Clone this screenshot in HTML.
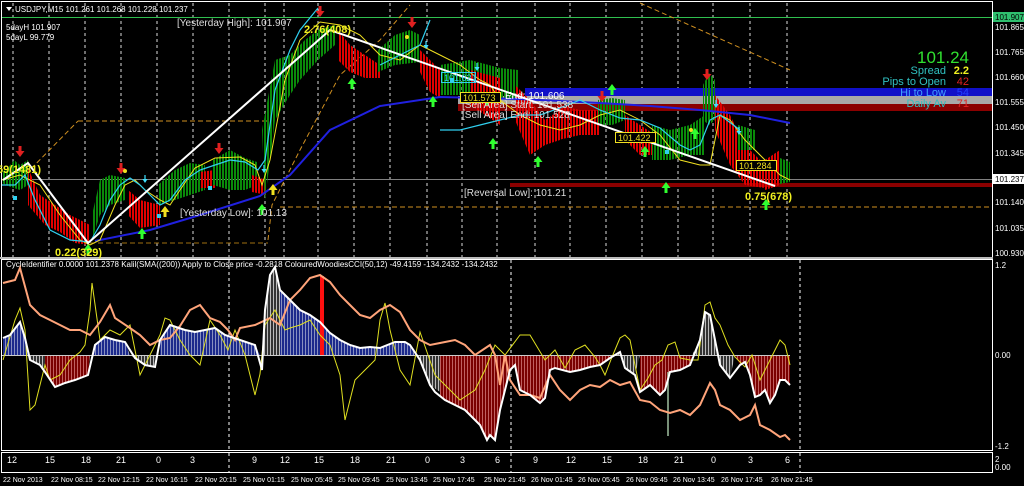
<!DOCTYPE html>
<html><head><meta charset="utf-8"><style>
html,body{margin:0;padding:0;background:#000;width:1024px;height:486px;overflow:hidden}
svg{display:block}
text{font-family:"Liberation Sans",sans-serif}
</style></head><body>
<svg width="1024" height="486" viewBox="0 0 1024 486" xmlns="http://www.w3.org/2000/svg">
<defs>
<pattern id="pg" width="3" height="10" patternUnits="userSpaceOnUse"><rect x="0" y="0" width="2" height="10" fill="#0a8a0a"/></pattern>
<pattern id="pr" width="3" height="10" patternUnits="userSpaceOnUse"><rect x="0" y="0" width="2" height="10" fill="#e00000"/></pattern>
<pattern id="hb" width="3" height="10" patternUnits="userSpaceOnUse"><rect x="0" y="0" width="2" height="10" fill="#1c2a8c"/><rect x="2" y="0" width="1" height="10" fill="#8890c0"/></pattern>
<pattern id="hr" width="3" height="10" patternUnits="userSpaceOnUse"><rect x="0" y="0" width="2" height="10" fill="#7a0000"/><rect x="2" y="0" width="1" height="10" fill="#c06060"/></pattern>
<pattern id="hg" width="3" height="10" patternUnits="userSpaceOnUse"><rect x="0" y="0" width="1" height="10" fill="#bbb"/><rect x="1" y="0" width="2" height="10" fill="#333"/></pattern>
<path id="ad" d="M-1.5,-7h3v5h3l-4.5,6l-4.5,-6h3z"/>
<path id="au" d="M-1.5,7h3v-5h3l-4.5,-6l-4.5,6h3z"/>
<path id="sd" d="M-0.6,-5h1.2v4h2l-2.6,4l-2.6,-4h2z"/>
</defs>
<rect width="1024" height="486" fill="#000"/>
<rect x="1.5" y="1.5" width="991" height="256" fill="none" stroke="#fff" stroke-width="1"/>
<rect x="0" y="257" width="993" height="2" fill="#bbb"/>
<rect x="1.5" y="259.5" width="991" height="191" fill="none" stroke="#fff" stroke-width="1"/>
<rect x="1.5" y="452.5" width="991" height="20" fill="none" stroke="#fff" stroke-width="1"/>
<g stroke="#ddd" stroke-width="1" stroke-dasharray="3,3">
<path d="M13 3V257M49 3V257M85 3V257M121 3V257M157 3V257M193 3V257M229 3V257M265 3V257M284 3V257M318 3V257M354 3V257M390 3V257M427 3V257M462 3V257M497 3V257M535 3V257M570 3V257M606 3V257M642 3V257M678 3V257M713 3V257M750 3V257M787 3V257"/>
<path d="M229 260V450M511 260V450M800 260V450M229 453V472M511 453V472M800 453V472" stroke="#fff"/>
</g>
<rect x="525" y="88" width="467" height="8" fill="#1010c8"/>
<rect x="458" y="96" width="534" height="8" fill="#a8a8a8"/>
<rect x="458" y="104" width="534" height="7" fill="#8b0000"/>
<rect x="510" y="183" width="482" height="4" fill="#8b0000"/>
<line x1="2" y1="179.5" x2="992" y2="179.5" stroke="#808080"/>
<line x1="2" y1="17.5" x2="992" y2="17.5" stroke="#2fbf4f"/>
<g stroke="#d09020" stroke-width="1" stroke-dasharray="5,3" fill="none">
<path d="M280 207H992"/>
<path d="M78 121H268"/>
<path d="M90 243H268" stroke="#a07010"/>
<path d="M20 180L78 121"/>
<path d="M268 240L272 205L300 150L340 75L380 40L410 5"/>
<path d="M640 3L790 70"/>
</g>
<g>
<polygon fill="url(#pg)" points="2,172 8,168 14,160 20,165 28,160 28,185 20,190 14,188 8,186 2,183"/>
<polygon fill="url(#pr)" points="28,168 40,195 55,205 70,215 90,225 90,245 75,243 60,232 45,225 28,205"/>
<polygon fill="url(#pg)" points="92,215 100,180 110,175 125,178 125,200 110,205 100,215 92,240"/>
<polygon fill="url(#pr)" points="128,190 140,200 160,205 160,225 140,228 128,215"/>
<polygon fill="url(#pg)" points="158,185 175,170 190,163 205,165 205,190 190,195 175,200 158,205"/>
<polygon fill="url(#pr)" points="200,172 215,170 215,188 200,188"/>
<polygon fill="url(#pg)" points="213,160 230,150 245,158 257,162 257,185 245,190 230,190 213,185"/>
<polygon fill="url(#pr)" points="252,175 266,180 266,195 252,192"/>
<polygon fill="url(#pg)" points="262,130 275,60 290,55 305,40 318,30 335,25 335,45 318,60 300,80 290,95 275,120 265,200"/>
<polygon fill="url(#pr)" points="338,30 350,45 365,55 380,65 380,78 365,78 350,72 338,60"/>
<polygon fill="url(#pg)" points="378,50 395,35 410,30 420,35 420,62 395,65 378,72"/>
<polygon fill="url(#pr)" points="420,50 430,60 440,70 440,98 430,92 420,72"/>
<polygon fill="url(#pg)" points="440,65 470,60 500,68 518,70 518,100 500,98 470,95 440,95"/>
<polygon fill="url(#pr)" points="470,70 500,78 500,125 470,105"/>
<polygon fill="url(#pr)" points="515,85 530,100 545,120 560,110 560,140 545,145 530,155 515,120"/>
<polygon fill="url(#pr)" points="558,105 580,110 600,110 600,135 580,135 558,140"/>
<polygon fill="url(#pg)" points="598,100 612,98 625,100 625,120 612,125 598,125"/>
<polygon fill="url(#pr)" points="625,115 640,125 655,135 655,155 640,155 625,140"/>
<polygon fill="url(#pg)" points="652,125 670,130 690,125 705,115 705,155 690,155 670,160 652,160"/>
<polygon fill="url(#pg)" points="703,85 709,73 715,80 715,120 709,125 703,120"/>
<polygon fill="url(#pr)" points="715,95 730,115 745,145 765,165 765,188 745,185 730,165 715,130"/>
<polygon fill="url(#pg)" points="738,125 755,130 755,150 738,150"/>
<polygon fill="url(#pr)" points="765,160 780,150 780,185 765,190"/>
<polygon fill="url(#pg)" points="780,158 790,162 790,182 780,184"/>
</g>
<polyline fill="none" stroke="#2020e0" stroke-width="2" points="95,241 150,230 200,215 260,196 290,175 330,130 380,106 440,97 520,99 600,103 650,106 700,110 750,115 790,123"/>
<polyline fill="none" stroke="#f0e020" stroke-width="1" points="2,180 20,175 40,185 60,215 80,240 90,245 100,240 115,205 125,185 135,180 145,190 160,200 170,205 180,190 195,168 215,158 240,157 255,165 262,185 270,160 285,80 300,40 320,22 340,25 360,35 380,55 400,60 420,45 440,55 460,65 480,80 490,85 500,100 520,115 540,125 560,130 580,125 600,115 620,110 640,120 660,135 680,160 700,165 710,165 720,115 730,120 745,140 755,150 770,165 780,175 790,180"/>
<polyline fill="none" stroke="#30d0f0" stroke-width="1.2" points="2,185 15,185 25,175 35,200 50,230 70,240 90,242 100,225 110,200 120,185 130,178 140,185 150,195 160,205 170,200 185,180 200,170 215,165 230,160 245,162 258,170 265,160 275,90 290,50 300,30 318,8"/>
<polyline fill="none" stroke="#30d0f0" stroke-width="1.2" points="380,65 400,55 420,45 430,20"/>
<polyline fill="none" stroke="#30d0f0" stroke-width="1.2" points="440,130 460,130 480,125 500,120 520,115 540,115 560,108 580,100 600,110 620,118 640,120 660,128 680,145 690,150 700,145 710,120 720,115 740,130"/>
<polyline fill="none" stroke="#fff" stroke-width="2" points="3,180 28,163 88,243 330,30 775,186"/>
<!-- arrows -->
<g fill="#e02020">
<use href="#ad" x="20" y="153"/><use href="#ad" x="121" y="170"/><use href="#ad" x="219" y="150"/><use href="#ad" x="320" y="13"/><use href="#ad" x="412" y="24"/><use href="#ad" x="602" y="98"/><use href="#ad" x="707" y="76"/>
</g>
<g fill="#30ff30">
<use href="#au" x="142" y="232"/><use href="#au" x="352" y="82"/><use href="#au" x="433" y="100"/><use href="#au" x="493" y="142"/><use href="#au" x="538" y="160"/><use href="#au" x="645" y="150"/><use href="#au" x="666" y="186"/><use href="#au" x="695" y="132"/><use href="#au" x="487" y="98"/><use href="#au" x="262" y="208"/><use href="#au" x="88" y="248"/><use href="#au" x="766" y="203"/><use href="#au" x="612" y="88"/>
</g>
<g fill="#40e0ff">
<use href="#sd" x="145" y="180"/><use href="#sd" x="264" y="170"/><use href="#sd" x="426" y="46"/><use href="#sd" x="477" y="68"/><use href="#sd" x="716" y="105"/><use href="#sd" x="739" y="132"/>
</g>
<g fill="#f0e020"><use href="#au" x="165" y="210" transform="scale(1)"/><use href="#au" x="273" y="188"/></g>
<g fill="#30d0f0"><rect x="13" y="196" width="4" height="4"/><rect x="208" y="186" width="4" height="4"/><rect x="157" y="214" width="4" height="4"/><rect x="450" y="78" width="4" height="4"/><rect x="665" y="150" width="4" height="4"/></g>
<g fill="#f0e020"><circle cx="125" cy="171" r="2"/><circle cx="407" cy="37" r="2"/><circle cx="691" cy="130" r="2"/><circle cx="752" cy="165" r="2"/></g>
<g font-size="9" fill="#fff">
<path d="M6 7h6l-3 4z" fill="#fff"/>
<text x="15" y="12" font-size="8">USDJPY,M15  101.261 101.268 101.228 101.237</text>
<text x="6" y="30" font-size="8">5dayH 101.907</text>
<text x="6" y="40" font-size="8">5dayL 99.779</text>
<text x="177" y="26" font-size="10" fill="#ddd">[Yesterday High]: 101.907</text>
<text x="180" y="216" font-size="10" fill="#ddd">[Yesterday Low]: 101.13</text>
<text x="464" y="196" font-size="10" fill="#ddd">[Reversal Low]: 101.21</text>
<text x="505" y="99" font-size="10">End: 101.606</text>
<text x="462" y="108" font-size="10" fill="#ddd">[Sell Area] Start: 101.538</text>
<text x="462" y="118" font-size="10" fill="#ddd">[Sell Area] End: 101.528</text>
</g>
<g font-size="11" font-weight="bold" fill="#f0f020">
<text x="304" y="33">2.76(408)</text>
<text x="55" y="256">0.22(329)</text>
<text x="-3" y="173">59(1481)</text>
<text x="745" y="200">0.75(678)</text>
</g>
<g font-size="9">
<rect x="441.5" y="72.5" width="34" height="10" fill="none" stroke="#30d0f0"/><text x="444" y="81" fill="#30d0f0">101.621</text>
<rect x="460.5" y="92.5" width="40" height="10" fill="#000" stroke="#f0e020"/><text x="463" y="101" fill="#f0e020">101.573</text>
<rect x="615.5" y="132.5" width="40" height="10" fill="#000" stroke="#f0e020"/><text x="618" y="141" fill="#f0e020">101.422</text>
<rect x="736.5" y="160.5" width="40" height="10" fill="#000" stroke="#f0e020"/><text x="739" y="169" fill="#f0e020">101.284</text>
</g>
<g text-anchor="end" font-size="11">
<text x="969" y="63" font-size="17" fill="#30e030">101.24</text>
<text x="946" y="74" fill="#30c0c0">Spread</text><text x="969" y="74" fill="#f0f020" font-weight="bold">2.2</text>
<text x="946" y="85" fill="#30c0c0">Pips to Open</text><text x="969" y="85" fill="#e02020">42</text>
<text x="946" y="96" fill="#40a0ff">Hi to Low</text><text x="969" y="96" fill="#2040ff">54</text>
<text x="946" y="107" fill="#30c0c0">Daily Av</text><text x="969" y="107" fill="#e02020">71</text>
</g>
<g font-size="8" fill="#fff">
<rect x="993" y="12" width="31" height="10" fill="#2fbf6f"/><text x="995" y="20" fill="#000">101.907</text>
<text x="995" y="30">101.865</text><text x="995" y="55">101.765</text><text x="995" y="80">101.660</text><text x="995" y="105">101.555</text><text x="995" y="130">101.450</text><text x="995" y="156">101.345</text>
<rect x="993" y="174" width="31" height="10" fill="#fff"/><text x="995" y="182" fill="#000">101.237</text>
<text x="995" y="205">101.140</text><text x="995" y="231">101.035</text><text x="995" y="256">100.930</text>
<text x="995" y="268">1.2</text><text x="995" y="358">0.00</text><text x="995" y="449">-1.2</text>
<text x="995" y="462">2</text><text x="995" y="470">0.00</text>
</g>
<text x="6" y="267" font-size="8" fill="#fff">CycleIdentifier 0.0000 101.2378  Kalil(SMA((200)) Apply to Close price -0.2818  ColouredWoodiesCCI(50,12) -49.4159 -134.2432 -134.2432</text>
<g>
<polygon fill="url(#hb)" points="3,355 3,338 10,335 20,322 25,338 30,355"/>
<polygon fill="url(#hg)" points="30,355 30,360 40,365 45,372 45,355"/>
<polygon fill="url(#hr)" points="45,355 45,372 55,387 65,383 75,380 88,375 90,355"/>
<polygon fill="url(#hb)" points="92,355 95,345 105,337 115,340 125,342 130,355"/>
<polygon fill="url(#hg)" points="130,355 135,358 145,365 155,367 158,355"/>
<polygon fill="url(#hb)" points="160,355 160,340 170,325 185,330 195,332 205,330 215,328 225,335 240,340 255,345 260,355"/>
<polygon fill="url(#hg)" points="262,355 265,310 270,275 275,267 280,290 285,355"/>
<polygon fill="url(#hb)" points="280,355 280,290 290,300 300,310 310,315 320,322 330,333 340,340 350,345 360,348 370,347 380,348 395,342 405,342 410,345 415,355"/>
<polygon fill="url(#hg)" points="415,355 420,360 430,385 440,392 440,355"/>
<polygon fill="url(#hr)" points="440,355 440,396 445,400 455,405 465,410 480,425 487,440 490,435 495,440 500,410 510,370 515,365 520,390 530,395 540,403 545,398 550,370 555,368 570,372 580,370 590,367 600,365 610,358 610,355"/>
<polygon fill="url(#hg)" points="610,355 610,358 620,352 625,368 635,375 640,355"/>
<polygon fill="url(#hr)" points="640,355 640,392 650,385 660,395 665,390 670,372 680,370 690,365 692,355"/>
<polygon fill="url(#hg)" points="692,355 700,340 705,312 710,315 715,340 720,365 730,378 735,355"/>
<polygon fill="url(#hr)" points="735,355 740,365 745,362 750,375 755,397 760,395 765,390 770,403 775,395 780,380 785,380 790,385 790,355"/>
</g>
<line x1="2" y1="355.5" x2="790" y2="355.5" stroke="#ccc"/>
<rect x="320" y="276" width="4" height="79" fill="#ff1010"/>
<line x1="668" y1="372" x2="668" y2="436" stroke="#a0c0a0" stroke-width="1.5"/>
<polyline fill="none" stroke="#e0e020" stroke-width="1" points="3,360 15,320 20,308 25,330 30,410 35,405 45,365 50,380 60,375 70,360 80,352 85,345 90,310 92,283 100,340 110,330 120,335 130,325 140,375 150,355 160,335 165,318 170,320 180,340 190,355 200,365 210,320 220,335 228,350 235,330 245,355 255,395 260,374 265,325 275,310 280,320 285,330 290,328 300,325 310,320 320,335 330,345 340,375 345,420 355,380 365,370 375,360 380,320 385,303 390,330 400,370 410,385 420,332 435,375 445,385 460,400 475,390 485,370 495,345 505,355 520,335 530,335 545,360 555,350 565,368 575,350 585,345 595,357 600,365 605,375 612,357 620,338 625,335 630,340 640,390 648,378 655,365 662,360 668,345 675,342 680,358 690,360 698,360 705,305 710,302 715,318 720,325 728,345 735,357 745,367 752,355 760,380 770,360 780,340 785,345 790,365"/>
<polyline fill="none" stroke="#ffa47a" stroke-width="2" points="3,283 15,280 20,268 30,305 40,315 50,320 60,325 70,330 80,330 90,335 100,322 110,305 115,318 130,328 140,335 150,345 160,340 170,338 180,326 190,310 200,305 210,318 220,322 228,330 235,340 240,328 255,325 270,318 280,325 290,300 300,290 310,278 320,275 330,282 340,295 350,305 360,315 370,318 380,310 390,305 400,312 410,330 420,340 430,345 440,343 455,340 465,345 475,355 490,345 495,355 500,385 505,355 510,380 520,395 530,395 540,398 550,375 560,390 570,400 580,390 590,385 600,387 610,380 620,385 630,382 640,400 650,402 660,410 670,413 680,410 690,415 700,405 710,383 715,390 720,405 730,410 740,420 750,415 755,405 760,425 770,430 780,437 785,435 790,440"/>
<polyline fill="none" stroke="#fff" stroke-width="2" points="3,338 10,335 20,322 25,338 30,360 40,365 45,372 55,387 65,383 75,380 88,375 95,345 105,337 115,340 125,342 135,358 145,365 155,367 160,340 170,325 185,330 195,332 205,330 215,328 225,335 240,340 255,345 262,370 265,310 270,275 275,267 280,290 290,300 300,310 310,315 320,322 330,333 340,340 350,345 360,348 370,347 380,348 395,342 405,342 410,345 420,360 430,385 435,392 445,400 455,405 465,410 480,425 487,440 490,435 495,440 500,410 510,370 515,365 520,390 530,395 540,403 545,398 550,370 555,368 570,372 580,370 590,367 600,365 610,358 620,352 625,368 635,375 640,392 650,385 660,395 665,390 670,372 680,370 690,365 700,340 705,312 710,315 715,340 720,365 730,378 740,365 745,362 750,375 755,397 760,395 765,390 770,403 775,395 780,380 785,380 790,385"/>
<g font-size="9" fill="#fff">
<text x="7" y="463">12</text><text x="45" y="463">15</text><text x="81" y="463">18</text><text x="116" y="463">21</text><text x="156" y="463">0</text><text x="190" y="463">3</text><text x="252" y="463">9</text><text x="280" y="463">12</text><text x="314" y="463">15</text><text x="350" y="463">18</text><text x="386" y="463">21</text><text x="425" y="463">0</text><text x="460" y="463">3</text><text x="495" y="463">6</text><text x="533" y="463">9</text><text x="566" y="463">12</text><text x="602" y="463">15</text><text x="638" y="463">18</text><text x="674" y="463">21</text><text x="711" y="463">0</text><text x="748" y="463">3</text><text x="785" y="463">6</text>
</g>
<g font-size="7" fill="#fff">
<text x="3" y="482">22 Nov 2013</text><text x="51" y="482">22 Nov 08:15</text><text x="98" y="482">22 Nov 12:15</text><text x="146" y="482">22 Nov 16:15</text><text x="195" y="482">22 Nov 20:15</text><text x="243" y="482">25 Nov 01:15</text><text x="291" y="482">25 Nov 05:45</text><text x="338" y="482">25 Nov 09:45</text><text x="386" y="482">25 Nov 13:45</text><text x="433" y="482">25 Nov 17:45</text><text x="484" y="482">25 Nov 21:45</text><text x="531" y="482">26 Nov 01:45</text><text x="578" y="482">26 Nov 05:45</text><text x="626" y="482">26 Nov 09:45</text><text x="673" y="482">26 Nov 13:45</text><text x="721" y="482">26 Nov 17:45</text><text x="771" y="482">26 Nov 21:45</text>
</g>
</svg>
</body></html>
